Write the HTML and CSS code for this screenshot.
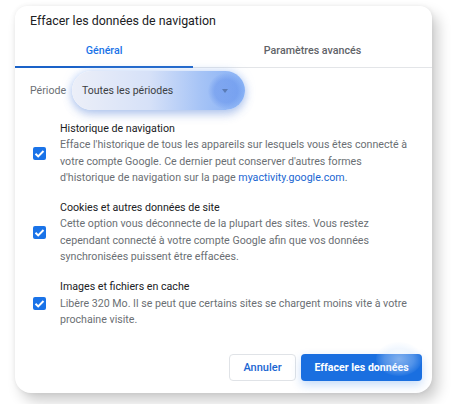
FILE: index.html
```html
<!DOCTYPE html>
<html lang="fr">
<head>
	<meta charset="utf-8">
	<title>Effacer les données de navigation</title>
	<link rel="stylesheet" href="styles.css">
</head>
<body>
	<div class="dialog">
		<h1 class="dialog-title">Effacer les données de navigation</h1>

		<div class="tabs">
			<span class="tab active">Général</span>
			<span class="tab">Paramètres avancés</span>
		</div>

		<div class="period-row">
			<span class="period-label">Période</span>
			<div class="select">
				<span>Toutes les périodes</span>
				<span class="select-arrow"></span>
			</div>
		</div>

		<div class="options">
			<div class="option">
				<span class="checkbox"><svg viewBox="0 0 12 12"><path d="M2.3 6.2l2.5 2.5 4.9-5"/></svg></span>
				<div class="option-text">
					<div class="option-name">Historique de navigation</div>
					<div class="option-desc">Efface l'historique de tous les appareils sur lesquels vous êtes connecté à votre compte Google. Ce dernier peut conserver d'autres formes d'historique de navigation sur la page <a href="#">myactivity.google.com</a>.</div>
				</div>
			</div>
			<div class="option">
				<span class="checkbox"><svg viewBox="0 0 12 12"><path d="M2.3 6.2l2.5 2.5 4.9-5"/></svg></span>
				<div class="option-text">
					<div class="option-name">Cookies et autres données de site</div>
					<div class="option-desc">Cette option vous déconnecte de la plupart des sites. Vous restez cependant connecté à votre compte Google afin que vos données synchronisées puissent être effacées.</div>
				</div>
			</div>
			<div class="option">
				<span class="checkbox"><svg viewBox="0 0 12 12"><path d="M2.3 6.2l2.5 2.5 4.9-5"/></svg></span>
				<div class="option-text">
					<div class="option-name">Images et fichiers en cache</div>
					<div class="option-desc">Libère 320 Mo. Il se peut que certains sites se chargent moins vite à votre prochaine visite.</div>
				</div>
			</div>
		</div>

		<div class="actions">
			<button class="btn btn-cancel">Annuler</button>
			<button class="btn btn-primary">Effacer les données</button>
		</div>
	</div>
</body>
</html>
```

FILE: styles.css
```css
*{
	margin: 0;
	padding: 0;
	box-sizing: border-box;
}
body{
	width: 451px;
	height: 404px;
	background: #fff;
	font-family: Roboto, "Noto Sans", sans-serif;
	overflow: hidden;
}
.dialog{
	width: 417px;
	height: 387px;
	margin: 6px 0 0 15px;
	background: #fff;
	border-radius: 12px 12px 16px 16px;
	box-shadow: 6px 8px 14px rgba(0,0,0,.2), 0 0 5px rgba(0,0,0,.07);
}
.dialog-title{
	padding: 6px 0 0 15px;
	height: 30px;
	font-size: 12.4px;
	font-weight: 400;
	line-height: 17px;
	color: #202124;
}
.tabs{
	display: flex;
	height: 32px;
	border-bottom: 1px solid #e3e5e8;
}
.tab{
	flex: auto;
	text-align: center;
	font-size: 10.7px;
	font-weight: 500;
	line-height: 30px;
	color: #5f6368;
}
.tab.active{
	color: #1a73e8;
	border-bottom: 2px solid #1a62c8;
	margin-bottom: -1px;
}
.period-row{
	display: flex;
	align-items: center;
	margin-top: 3px;
	padding-left: 15px;
	height: 39px;
}
.period-label{
	font-size: 10.6px;
	color: #6b6f74;
	width: 42px;
}
.select{
	position: relative;
	display: flex;
	align-items: center;
	justify-content: space-between;
	width: 173px;
	height: 39px;
	padding: 0 0 0 10px;
	border-radius: 20px;
	background: linear-gradient(90deg, #eceff8 0%, #d6e1f8 45%, #a5c3f6 75%, #86b0f5 100%);
	box-shadow: 0 5px 10px rgba(70,110,200,.28), 0 0 10px rgba(150,185,245,.55);
	font-size: 10.5px;
	color: #3c4043;
}
.select-arrow{
	position: relative;
	width: 36px;
	height: 36px;
	margin-right: 1px;
	border-radius: 50%;
	background: radial-gradient(circle, rgba(100,145,235,.5) 45%, rgba(120,160,240,0) 72%);
}
.select-arrow::after{
	content: "";
	position: absolute;
	left: 14px;
	top: 16px;
	border-left: 3.5px solid transparent;
	border-right: 3.5px solid transparent;
	border-top: 4px solid #5a7bb5;
}
.options{
	margin-top: 11px;
	display: flex;
	flex-direction: column;
	gap: 14px;
}
.option{
	display: flex;
	align-items: center;
	padding-left: 18px;
}
.checkbox{
	flex: none;
	width: 13px;
	height: 13px;
	border-radius: 2px;
	background: #1a73e8;
	margin-right: 14px;
	display: flex;
}
.checkbox svg{
	width: 13px;
	height: 13px;
	fill: none;
	stroke: #fff;
	stroke-width: 1.8;
}
.option-text{
	width: 355px;
	font-size: 10.65px;
	line-height: 16.3px;
}
.option-name{
	color: #202124;
}
.option-desc{
	color: #6b6f74;
}
.option-desc a{
	color: #1a66d2;
	text-decoration: none;
}
.actions{
	display: flex;
	justify-content: flex-end;
	gap: 5px;
	margin-top: 26px;
	padding-right: 10px;
}
.btn{
	height: 27px;
	border-radius: 4px;
	font-family: inherit;
	font-size: 11px;
	font-weight: 500;
}
.btn-cancel{
	width: 67px;
	background: #fff;
	border: 1px solid #e0e3e7;
	color: #1a66d2;
}
.btn-primary{
	position: relative;
	width: 121px;
	background: #1a6fe0;
	border: none;
	color: #fff;
	font-size: 10.6px;
	font-weight: 700;
	box-shadow: 0 4px 10px rgba(26,115,232,.25);
}
.btn-primary::after{
	content: "";
	position: absolute;
	right: 0;
	top: -12px;
	width: 46px;
	height: 34px;
	border-radius: 50%;
	background: radial-gradient(ellipse, rgba(255,255,255,.45) 0%, rgba(210,230,255,.3) 45%, rgba(150,190,250,0) 75%);
}
```
